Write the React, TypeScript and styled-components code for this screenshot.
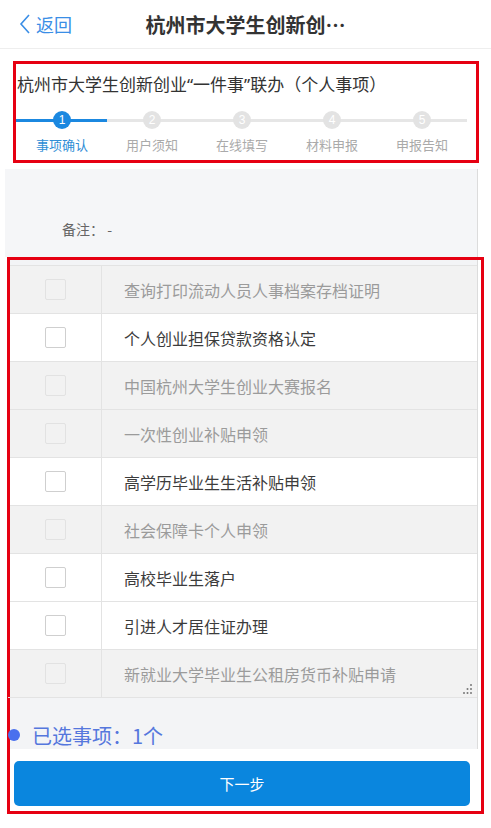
import React from "react";
import styled, { createGlobalStyle } from "styled-components";

const GlobalStyle = createGlobalStyle`
  body {
    margin: 0;
    background: #ffffff;
    font-family: "Noto Sans CJK SC", "Noto Sans", sans-serif;
  }
`;

const Page = styled.div`
  width: 491px;
  min-height: 828px;
  background: #fff;
  display: flex;
  flex-direction: column;
`;

const Header = styled.div`
  height: 49px;
  border-bottom: 1px solid #eeeeee;
  display: flex;
  align-items: center;
  position: relative;
  padding-left: 19px;
  box-sizing: border-box;
`;

const Back = styled.div`
  display: flex;
  align-items: center;
  gap: 5px;
  color: #3a8ee6;
  font-size: 18px;
`;

const Title = styled.div`
  position: absolute;
  left: 0;
  right: 0;
  text-align: center;
  font-size: 20px;
  font-weight: 700;
  color: #333;
  pointer-events: none;
`;

const Frame = styled.div<{ $left: number; $width: number }>`
  border: 3px solid #e60012;
  margin-left: ${(p) => p.$left}px;
  width: ${(p) => p.$width}px;
  box-sizing: border-box;
`;

const TopFrame = styled(Frame)`
  margin-top: 12px;
  height: 102px;
  padding: 8px 0 0 0;
`;

const ItemName = styled.div`
  font-family: "Noto Sans", "Noto Sans CJK SC", sans-serif;
  font-size: 17px;
  color: #333;
  padding-left: 1px;
  line-height: 26px;
  white-space: nowrap;
`;

const Steps = styled.div`
  display: grid;
  grid-template-columns: repeat(5, 90px);
  margin-left: 1px;
  margin-top: 13px;
`;

const Step = styled.div<{ $active: boolean; $first: boolean }>`
  display: flex;
  flex-direction: column;
  align-items: center;
  position: relative;
  &::before {
    content: "";
    position: absolute;
    top: 8px;
    left: ${(p) => (p.$first ? "-1px" : "0")};
    right: 0;
    height: 3px;
    background: ${(p) => (p.$active ? "#1b88e0" : "#e6e6e6")};
  }
`;

const Dot = styled.div<{ $active: boolean }>`
  width: 18px;
  height: 18px;
  border-radius: 50%;
  background: ${(p) => (p.$active ? "#1b88e0" : "#e3e3e3")};
  color: #fff;
  font-size: 12px;
  line-height: 18px;
  text-align: center;
  position: relative;
  font-family: "Liberation Sans", sans-serif;
`;

const StepLabel = styled.div<{ $active: boolean }>`
  margin-top: 6px;
  font-size: 13px;
  color: ${(p) => (p.$active ? "#2f8ed6" : "#aaaaaa")};
`;

const Note = styled.div`
  margin: 6px 13px 0 5px;
  height: 88px;
  background: #f5f6f8;
  border-right: 1px solid #dcdcdc;
  display: flex;
  align-items: flex-end;
  padding: 0 0 18px 57px;
  box-sizing: border-box;
  font-size: 14px;
  color: #666;
`;

const Panel = styled.div`
  background: #f3f4f6;
  margin-right: 3px;
  padding-top: 5px;
  border-right: 1px solid #dcdcdc;
`;

const Row = styled.div<{ $disabled: boolean }>`
  display: flex;
  height: 48px;
  background: ${(p) => (p.$disabled ? "#f2f2f2" : "#ffffff")};
  border-top: 1px solid #e3e3e3;
  box-sizing: border-box;
  position: relative;
`;

const CheckCell = styled.div`
  width: 91px;
  border-right: 1px solid #e3e3e3;
  display: flex;
  align-items: center;
  justify-content: center;
`;

const Box = styled.div<{ $disabled: boolean }>`
  width: 19px;
  height: 19px;
  border: 1px solid ${(p) => (p.$disabled ? "#e2e2e2" : "#cfcfcf")};
  border-radius: 2px;
  background: ${(p) => (p.$disabled ? "#f2f2f2" : "#fff")};
`;

const RowText = styled.div<{ $disabled: boolean }>`
  padding-left: 22px;
  display: flex;
  align-items: center;
  font-size: 16px;
  color: ${(p) => (p.$disabled ? "#9b9b9b" : "#3c3c3c")};
`;

const Grip = styled.svg`
  position: absolute;
  right: 4px;
  bottom: 2px;
`;

const Selected = styled.div`
  height: 51px;
  border-top: 1px solid #e3e3e3;
  display: flex;
  align-items: flex-end;
  gap: 12px;
  margin-left: -2px;
  font-size: 20px;
  color: #5577dd;
  line-height: 26px;
  overflow: hidden;
`;

const BlueDot = styled.span`
  width: 12px;
  height: 12px;
  border-radius: 50%;
  background: #4a70ee;
  margin-bottom: 8px;
  flex-shrink: 0;
`;

const NextButton = styled.button`
  display: block;
  margin: 12px 0 5px 4px;
  width: 456px;
  height: 45px;
  border: none;
  border-radius: 5px;
  background: #0a86de;
  color: #fff;
  font-size: 15px;
  font-family: inherit;
`;

const steps = ["事项确认", "用户须知", "在线填写", "材料申报", "申报告知"];

const items: { name: string; disabled: boolean }[] = [
  { name: "查询打印流动人员人事档案存档证明", disabled: true },
  { name: "个人创业担保贷款资格认定", disabled: false },
  { name: "中国杭州大学生创业大赛报名", disabled: true },
  { name: "一次性创业补贴申领", disabled: true },
  { name: "高学历毕业生生活补贴申领", disabled: false },
  { name: "社会保障卡个人申领", disabled: true },
  { name: "高校毕业生落户", disabled: false },
  { name: "引进人才居住证办理", disabled: false },
  { name: "新就业大学毕业生公租房货币补贴申请", disabled: true },
];

export default function App() {
  return (
    <Page>
      <GlobalStyle />
      <Header>
        <Back>
          <svg width="12" height="22" viewBox="0 0 12 22">
            <path d="M10 2 L2 11 L10 20" fill="none" stroke="#3a8ee6" strokeWidth="1.6" />
          </svg>
          返回
        </Back>
        <Title>杭州市大学生创新创…</Title>
      </Header>

      <TopFrame $left={13} $width={466}>
        <ItemName>杭州市大学生创新创业“一件事”联办（个人事项）</ItemName>
        <Steps>
          {steps.map((s, i) => (
            <Step key={s} $active={i === 0} $first={i === 0}>
              <Dot $active={i === 0}>{i + 1}</Dot>
              <StepLabel $active={i === 0}>{s}</StepLabel>
            </Step>
          ))}
        </Steps>
      </TopFrame>

      <Note>备注：&nbsp;-</Note>

      <Frame $left={7} $width={477}>
        <Panel>
          {items.map((it, i) => (
            <Row key={it.name} $disabled={it.disabled}>
              <CheckCell>
                <Box $disabled={it.disabled} />
              </CheckCell>
              <RowText $disabled={it.disabled}>{it.name}</RowText>
              {i === items.length - 1 && (
                <Grip width="10" height="12" viewBox="0 0 10 12">
                  <g fill="#777">
                    <circle cx="8" cy="2" r="1" />
                    <circle cx="8" cy="6" r="1" />
                    <circle cx="8" cy="10" r="1" />
                    <circle cx="4.5" cy="6" r="1" />
                    <circle cx="4.5" cy="10" r="1" />
                    <circle cx="1" cy="10" r="1" />
                  </g>
                </Grip>
              )}
            </Row>
          ))}
          <Selected>
            <BlueDot />
            已选事项：1个
          </Selected>
        </Panel>
        <NextButton>下一步</NextButton>
      </Frame>
    </Page>
  );
}
